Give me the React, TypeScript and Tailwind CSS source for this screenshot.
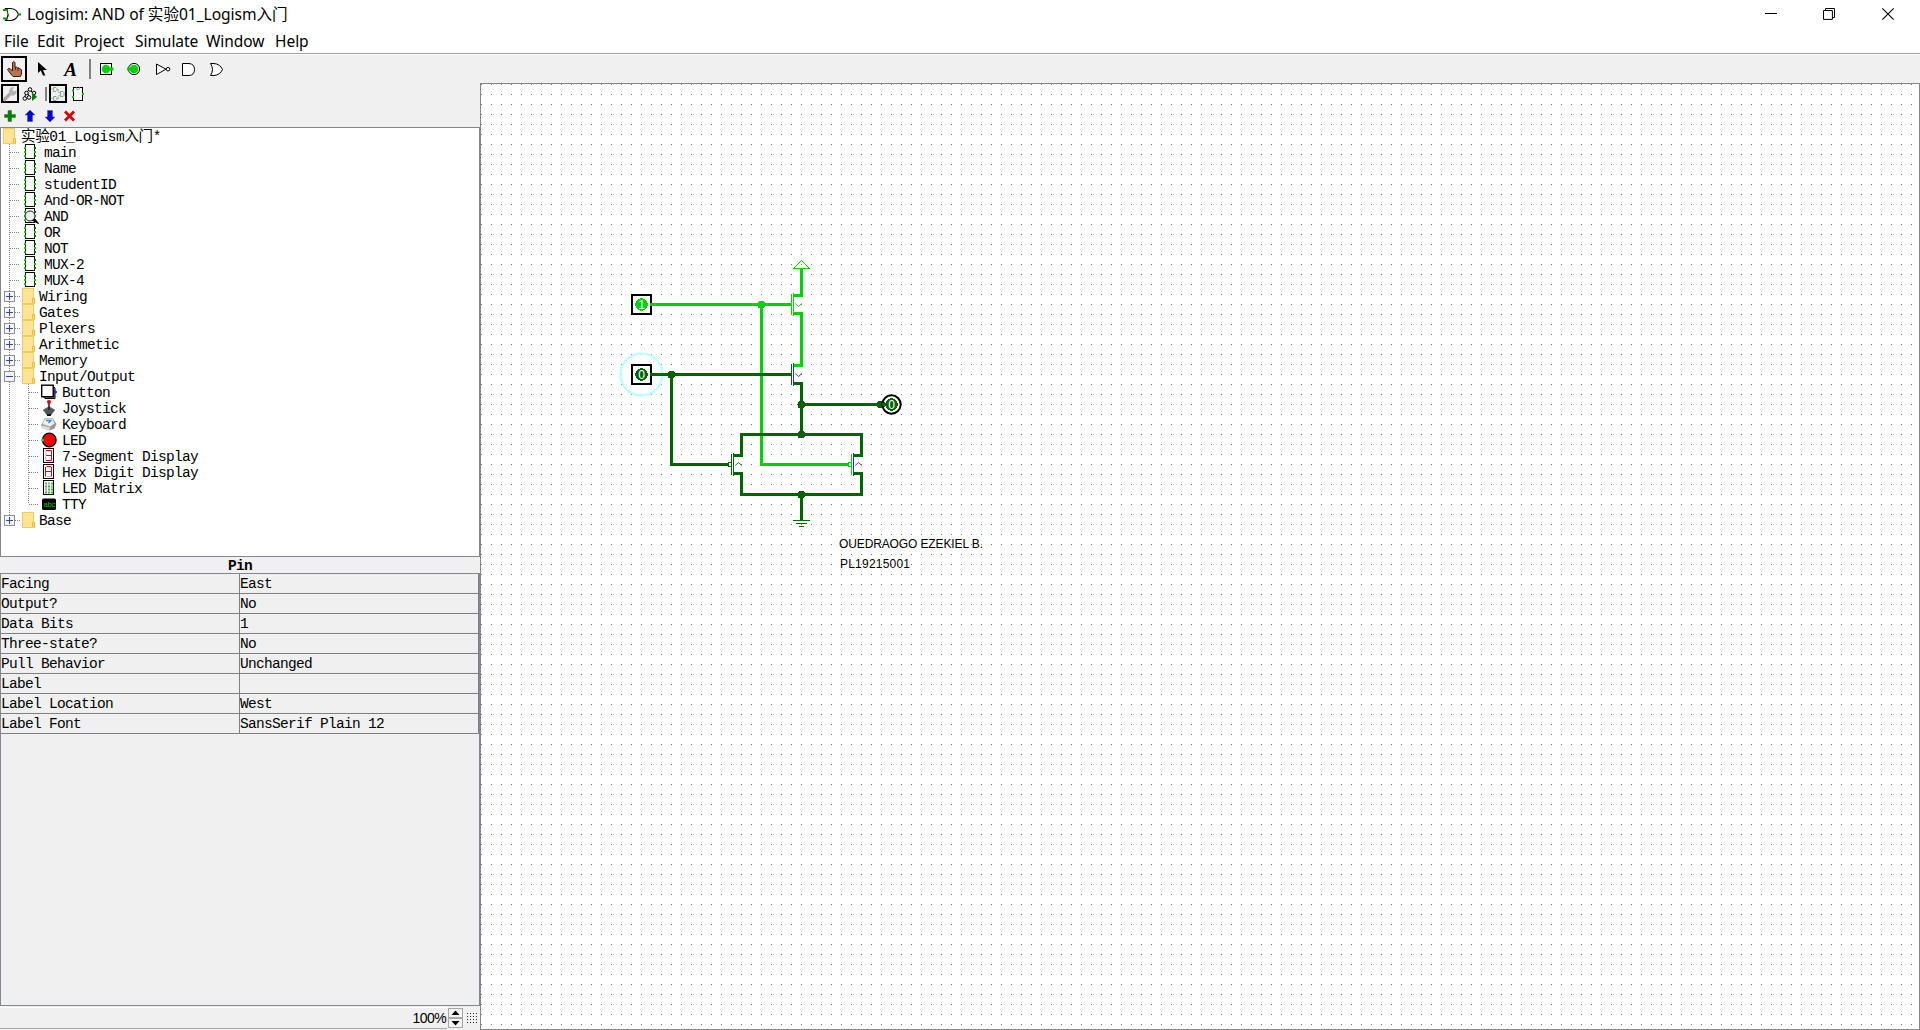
import type { ReactNode } from "react";

const MONO = "font-['Liberation_Mono','Noto_Sans_CJK_SC',monospace] text-[14.5px] tracking-[-0.7px] leading-[18px]";
const UI = "font-['Noto_Sans','Noto_Sans_CJK_SC',sans-serif]";

/* An icon cell whose drawing uses window coordinates, cropped to the cell. */
function Cell({ x, y, w, h, children }: { x: number; y: number; w: number; h: number; children?: ReactNode }) {
  return (
    <svg className="block shrink-0" width={w} height={h} viewBox={`${x} ${y} ${w} ${h}`} fill="none">
      {children}
    </svg>
  );
}

function TitleBar() {
  return (
    <header className="flex h-[28px] shrink-0 items-center bg-white">
      <Cell x={0} y={0} w={27} h={28}>
        <path d="M5.5 8.5H11C15 9 17.500 11 18.500 14.500C17 18 15 20 11 20.500H5.500C9 16.500 9 12.500 5.500 8.500Z" stroke="#000" strokeWidth="1.1" />
        <path d="M3 10H8M3 18.500H8M18 14.500H21" stroke="#009a00" strokeWidth="1.8" />
      </Cell>
      <span className={`${UI} text-[15.6px] leading-[28px] tracking-[-0.05px] whitespace-nowrap text-black`}>
        Logisim: AND of 实验01_Logism入门
      </span>
      <div className="ml-auto flex">
        <Cell x={1742} y={0} w={58} h={28}>
          <path d="M1765 13.5H1777" stroke="#000" />
        </Cell>
        <Cell x={1800} y={0} w={58} h={28}>
          <path d="M1823.5 10.5h8.900v8.9h-8.900zM1825.5 10V8.5h9v9H1832" stroke="#000" />
        </Cell>
        <Cell x={1858} y={0} w={62} h={28}>
          <path d="M1882.3 8.3L1893.7 19.7M1893.7 8.3L1882.3 19.7" stroke="#000" strokeWidth="1.1" />
        </Cell>
      </div>
    </header>
  );
}

function MenuBar() {
  return (
    <nav className={`${UI} flex h-[26px] shrink-0 border-b border-[#a0a0a0] bg-white pl-[4px] text-[15.5px] leading-[26px] tracking-[-0.05px] text-black`}>
      <span className="w-[33px]">File</span>
      <span className="w-[37px]">Edit</span>
      <span className="w-[61px]">Project</span>
      <span className="w-[71px]">Simulate</span>
      <span className="w-[69px]">Window</span>
      <span>Help</span>
    </nav>
  );
}

function MainToolbar() {
  return (
    <div className="flex h-[29px] shrink-0 border-t border-white bg-[#f0f0f0]">
      <Cell x={0} y={55} w={28} h={28}>
        <rect x="2" y="57" width="24" height="24" stroke="#000" strokeWidth="2" />
        <path
          d="M12.5 62.5Q13.5 60.5 15 62.5V67.5Q16.5 66 17.5 68Q19 67 19.7 69Q21.7 68.5 21.5 71V74L20.5 76.5H13L10 73L7.5 69.5Q8.5 67.5 10.5 69L12.5 71Z"
          fill="#b9734f"
          stroke="#3b1d10"
        />
        <path d="M15.5 67v3M18 68v3" stroke="#3b1d10" strokeWidth="0.8" />
      </Cell>
      <Cell x={28} y={55} w={28} h={28}>
        <path d="M38 62V73L40.8 70.5L43 75.5H45.3L43 70H47Z" fill="#000" />
      </Cell>
      <div className="flex w-[28px] shrink-0 items-center justify-center pt-px pl-px font-['Liberation_Serif',serif] text-[19px] leading-[28px] font-bold text-black italic">A</div>
      <Cell x={84} y={55} w={9} h={28}>
        <path d="M90 59V79" stroke="#808080" strokeWidth="2" />
      </Cell>
      <Cell x={93} y={55} w={28} h={28}>
        <rect x="100.5" y="63.5" width="11" height="11" fill="#fff" stroke="#000" />
        <circle cx="106" cy="69" r="4.3" fill="#00d200" />
        <path d="M106 69H113.5" stroke="#00d200" strokeWidth="3" />
      </Cell>
      <Cell x={121} y={55} w={28} h={28}>
        <circle cx="134" cy="69" r="5.6" fill="#fff" stroke="#000" />
        <circle cx="134" cy="69" r="4.3" fill="#00d200" />
        <path d="M127 69H134" stroke="#00d200" strokeWidth="3" />
      </Cell>
      <Cell x={149} y={55} w={28} h={28}>
        <path d="M156.5 64V74.5L166 69.2Z" fill="#fff" stroke="#000" />
        <circle cx="168" cy="69.2" r="1.8" fill="#fff" stroke="#000" />
      </Cell>
      <Cell x={177} y={55} w={28} h={28}>
        <path d="M182.5 63.5H189Q194.5 64 194.5 69.5Q194.5 75 189 75.5H182.5Z" fill="#fff" stroke="#000" />
      </Cell>
      <Cell x={205} y={55} w={28} h={28}>
        <path d="M210.5 63.5H214Q220 64 222.5 69.5Q220 75 214 75.5H210.5Q214.5 69.5 210.5 63.5Z" fill="#fff" stroke="#000" />
      </Cell>
    </div>
  );
}

function ExplorerToolbar() {
  return (
    <div className="flex h-[22px] shrink-0">
      <Cell x={0} y={83} w={22} h={22}>
        <rect x="2" y="85" width="16" height="17" stroke="#000" strokeWidth="2" />
        <path d="M4.5 99.5L11 93" stroke="#a8a8a8" strokeWidth="3.2" strokeLinecap="round" />
        <path d="M10 95L8.8 91L11 87.5L14 87L12.5 90L14 91.5L16.7 90L16.3 93.5L13.5 95.8Z" fill="#b4b4b4" />
      </Cell>
      <Cell x={22} y={83} w={20} h={22}>
        <path d="M25 99V96L27 92L29.5 89L32 92L34.5 95M27 92L29 96" stroke="#000" />
        <g fill="#f0f0f0" stroke="#000">
          <circle cx="30" cy="89.5" r="1.800" />
          <circle cx="26.5" cy="93" r="1.800" />
          <circle cx="34" cy="93" r="1.800" />
          <circle cx="24.8" cy="98.5" r="1.800" />
          <circle cx="29" cy="97.5" r="1.800" />
        </g>
        <path d="M32 92L37 97L32 101Z" fill="#008000" />
      </Cell>
      <Cell x={42} y={83} w={6} h={22}>
        <path d="M46 87V101" stroke="#808080" strokeWidth="2" />
      </Cell>
      <Cell x={48} y={83} w={22} h={22}>
        <rect x="50" y="85" width="16" height="17" stroke="#000" strokeWidth="2" />
        <path d="M51 89H53M51 98.500H53M57 89.5H58.500V92.500H60.5M57 98.500H58.500V95.500H60.5M64 93.5H65" stroke="#90e090" strokeWidth="1.200" />
        <path d="M53.5 87.5h2.500l1 1v2l-1 1h-2.500zM53.500 96.500h2.500l1 1v2l-1 1h-2.500zM60.5 91.5h2.5l1 1v3l-1 1h-2.5z" stroke="#999" />
      </Cell>
      <Cell x={70} y={83} w={20} h={22}>
        <rect x="73.5" y="87.5" width="9" height="13" fill="#fff" stroke="#000" />
        <path d="M76.5 87.5Q76.5 90 78 90Q79.5 90 79.5 87.5" stroke="#9a9a9a" />
        <path d="M73 89.500v2M73 96v2M83 93v2" stroke="#00c400" strokeWidth="2" />
      </Cell>
    </div>
  );
}

function EditToolbar() {
  return (
    <div className="flex h-[22px] shrink-0">
      <Cell x={0} y={105} w={20} h={22}>
        <path d="M8 110.5h3.5v4h4v3h-4v4H8v-4H4.500v-3H8z" fill="#008000" stroke="#3f7f3f" strokeWidth="0.6" />
      </Cell>
      <Cell x={20} y={105} w={20} h={22}>
        <path d="M30 110L35 115H32.500V121.500H27.500V115H25Z" fill="#0000e0" stroke="#5a5a90" strokeWidth="0.6" />
      </Cell>
      <Cell x={40} y={105} w={20} h={22}>
        <path d="M50 122L45 117H47.500V110.500H52.500V117H55Z" fill="#0000e0" stroke="#5a5a90" strokeWidth="0.6" />
      </Cell>
      <Cell x={60} y={105} w={20} h={22}>
        <path d="M65 111.500L74 120.500M74 111.500L65 120.500" stroke="#dc0000" strokeWidth="2.8" />
      </Cell>
    </div>
  );
}

const DOT = { stroke: "#808080", strokeDasharray: "1 1", shapeRendering: "crispEdges" as const };

function Folder({ x }: { x: number }) {
  return (
    <g>
      <path d={`M${x} 0.500H${x + 11.5}V10.500H${x + 13}V15.500H${x}Z`} fill="#ffe494" />
      <path d={`M${x + 0.5} 0V16M${x} 0.500H${x + 11.5}M${x + 11.5} 0V10M${x} 15.500H${x + 13}`} stroke="#f0cd5c" />
      <path d={`M${x + 10.500} 15V10.500H${x + 12.500}V15.500`} stroke="#e8b93c" />
    </g>
  );
}

function CircuitIcon({ current }: { current?: boolean }) {
  return (
    <g>
      <rect x="25.500" y="0.500" width="9" height="14" fill="#fff" stroke="#000" />
      <path d="M25 3v2M25 7v2M25 11v2M35 7v2" stroke="#00d200" strokeWidth="2" />
      <path d="M35 3v2M35 11v2" stroke="#006400" strokeWidth="2" />
      {current && (
        <>
          <circle cx="30" cy="8" r="5" fill="#eeeeff" stroke="#222" />
          <path d="M32.500 12.500L35 11L38.500 15.500Z" fill="#000" stroke="#000" />
        </>
      )}
    </g>
  );
}

const ioIcons: Record<string, ReactNode> = {
  Button: (
    <g>
      <path d="M43 12.500L45 14.500H55V4L53 2" fill="#777" stroke="#000" />
      <rect x="41.700" y="1.200" width="11.500" height="11.500" fill="#fff" stroke="#000" strokeWidth="1.4" />
      <circle cx="55.500" cy="8" r="1.500" fill="#2020ff" />
    </g>
  ),
  Joystick: (
    <g>
      <path d="M43 10L49 6.500L55 10L51 15H47Z" fill="#555" stroke="#777" strokeWidth="0.6" />
      <path d="M47 15H51" stroke="#111" strokeWidth="2" />
      <path d="M49 3V10" stroke="#222" strokeWidth="1.500" />
      <circle cx="49" cy="2" r="2" fill="#e00000" />
    </g>
  ),
  Keyboard: (
    <g>
      <path d="M41 9.500L45 2L53 2.500L56.500 8L54.500 12.500L49.500 14.500L42 12Z" fill="#999" />
      <path d="M42.500 8L45.500 2.500L52.500 3L54.500 7.500L50 10.500Z" fill="#f0f0f0" />
      <path d="M46 4.500H51L48.500 7" stroke="#3a8be0" strokeWidth="1.400" />
      <path d="M41.500 9.500L50 11.500L49.500 14L42 12Z" fill="#ddd" />
    </g>
  ),
  LED: (
    <g>
      <circle cx="49.300" cy="8" r="6.800" fill="#f80000" stroke="#000" strokeWidth="1.300" />
      <circle cx="42.500" cy="8" r="1.500" fill="#40c840" />
    </g>
  ),
  "7-Segment Display": (
    <g>
      <rect x="43.500" y="0.500" width="10" height="14" fill="#fff" stroke="#000" />
      <path d="M46 3.500V7" stroke="#bbb" />
      <path d="M46 2.500H51.500V12.500H46M46 7.500H51" stroke="#e80000" />
      <path d="M45.500 8.500V12" stroke="#bbb" />
    </g>
  ),
  "Hex Digit Display": (
    <g>
      <rect x="43.500" y="0.500" width="10" height="14" fill="#fff" stroke="#000" />
      <path d="M46.500 12.500H51" stroke="#bbb" />
      <path d="M45.500 12.500V3M46.500 2.500H51M51.500 3V12.500M46 7.500H51" stroke="#e80000" />
    </g>
  ),
  "LED Matrix": (
    <g>
      <rect x="43.500" y="0.500" width="10" height="14" fill="#fff" stroke="#000" />
      <path d="M46 2.500V13.500M49 2.500V13.500M52 2.500V13.500" stroke="#3cb43c" strokeWidth="2" strokeDasharray="2 1" />
      <path d="M48 3.500h2M51 6.500h2M45 9.500h2" stroke="#bbb" strokeWidth="2" />
    </g>
  ),
  TTY: (
    <g>
      <rect x="42" y="2.500" width="14" height="11.500" rx="1.500" fill="#000" />
      <text x="43.500" y="11" fontSize="7.500" fontFamily="Liberation Mono" letterSpacing="-0.600" fill="#00c400">
        abc
      </text>
    </g>
  ),
};

type Kind = "root" | "circuit" | "library" | "tool";
type Item = { kind: Kind; name: string; open?: boolean; last?: boolean };

const items: Item[] = [
  { kind: "root", name: "实验01_Logism入门*" },
  ...["main", "Name", "studentID", "And-OR-NOT", "AND", "OR", "NOT", "MUX-2", "MUX-4"].map((name): Item => ({ kind: "circuit", name })),
  ...["Wiring", "Gates", "Plexers", "Arithmetic", "Memory"].map((name): Item => ({ kind: "library", name })),
  { kind: "library", name: "Input/Output", open: true },
  ...Object.keys(ioIcons).map((name): Item => ({ kind: "tool", name, last: name === "TTY" })),
  { kind: "library", name: "Base", last: true },
];

const gutter: Record<Kind, number> = { root: 20, circuit: 43, library: 38, tool: 61 };

function TreeRow({ kind, name, open, last }: Item) {
  return (
    <div className="flex h-[16px]">
      <Cell x={1} y={0} w={gutter[kind]} h={16}>
        {kind === "root" && <Folder x={3} />}
        {kind !== "root" && <path d={kind === "library" && last ? "M9.500 0V8" : "M9.500 0V16"} {...DOT} />}
        {kind === "circuit" && (
          <>
            <path d="M10 8.500H20" {...DOT} />
            <CircuitIcon current={name === "AND"} />
          </>
        )}
        {kind === "library" && (
          <>
            <path d="M15 8.500H21" {...DOT} />
            <rect x="4.500" y="3.500" width="10" height="10" fill="#f4f4f4" stroke="#909090" />
            <path d={open ? "M6 8.500H13" : "M6 8.500H13M9.500 5V12"} stroke="#304a94" />
            <Folder x={22} />
          </>
        )}
        {kind === "tool" && (
          <>
            <path d={last ? "M28.500 0V8" : "M28.500 0V16"} {...DOT} />
            <path d="M29 8.500H38" {...DOT} />
            {ioIcons[name]}
          </>
        )}
      </Cell>
      <span className={kind === "root" ? "tracking-[-0.35px] whitespace-pre" : "whitespace-pre"}>{name}</span>
    </div>
  );
}

const attributes: [string, string][] = [
  ["Facing", "East"],
  ["Output?", "No"],
  ["Data Bits", "1"],
  ["Three-state?", "No"],
  ["Pull Behavior", "Unchanged"],
  ["Label", ""],
  ["Label Location", "West"],
  ["Label Font", "SansSerif Plain 12"],
];

function AttributeTable() {
  return (
    <section className={`${MONO} flex min-h-0 flex-1 flex-col text-black`}>
      <h2 className="h-[16px] text-center font-bold">Pin</h2>
      <div className="min-h-0 flex-1 border border-[#828790]">
        <div className="w-[478px] border-r border-[#808080]">
          {attributes.map(([key, value]) => (
            <div key={key} className="flex h-[20px] border-b border-[#808080] leading-[21px]">
              <span className="w-[239px] border-r border-[#808080]">{key}</span>
              <span className="whitespace-pre">{value}</span>
            </div>
          ))}
        </div>
      </div>
    </section>
  );
}

function ZoomBar() {
  return (
    <footer className="flex h-[24px] shrink-0 items-center">
      <div className="flex h-[22px] w-[447px] items-center justify-end border-t border-b border-t-white border-b-[#a8a8a8] bg-[#f0f0f0] pr-px font-['Liberation_Sans',sans-serif] text-[14px] leading-[20px] tracking-[-0.6px] text-black">
        100%
      </div>
      <Cell x={447} y={1006} w={33} h={24}>
        <rect x="448.500" y="1008.500" width="14" height="9" fill="#f3f3f3" stroke="#a8a8a8" />
        <rect x="448.500" y="1018.500" width="14" height="9" fill="#f3f3f3" stroke="#a8a8a8" />
        <path d="M455.500 1010.500L459.500 1015H451.500ZM455.500 1025.500L459.500 1021H451.500Z" fill="#000" />
        <path d="M467 1013.500H478M467 1016.500H478M467 1019.500H478M467 1022.500H478" stroke="#222" strokeDasharray="1 2" shapeRendering="crispEdges" />
      </Cell>
    </footer>
  );
}

const ON = "#00d200";
const OFF = "#006400";
const FLOAT = "#2828ff";

type TransistorProps = { x: number; y: number; gate: string; body: string; source: string; drain: string; inverted?: boolean };

function Transistor({ x, y, gate, body, source, drain, inverted }: TransistorProps) {
  return (
    <g transform={`translate(${x} ${y})`}>
      <path d="M-7 -8.500H2" stroke={source} strokeWidth="3" />
      <path d="M-7 9.500H2" stroke={drain} strokeWidth="3" />
      <path d="M-9.500 -10V11" stroke={gate} />
      <path d="M-7.500 -11V12" stroke={body} />
      {inverted ? (
        <>
          <path d="M-5.800 1.500L-2.500 -1.500L0.800 1.500" stroke={body} strokeWidth="0.900" shapeRendering="geometricPrecision" />
          <rect x="-12.500" y="-1.500" width="3" height="4" fill="#fff" stroke={gate} />
        </>
      ) : (
        <path d="M-5.800 -0.500L-2.500 2.500L0.800 -0.500" stroke={body} strokeWidth="0.900" shapeRendering="geometricPrecision" />
      )}
    </g>
  );
}

function PinValue({ x, y, color, value }: { x: number; y: number; color: string; value: string }) {
  return (
    <g>
      <circle cx={x} cy={y} r="6.300" fill={color} />
      <text x={x} y={y + 4.300} textAnchor="middle" fontFamily="Liberation Sans" fontSize="12" fill="#fff">
        {value}
      </text>
    </g>
  );
}

function Canvas() {
  return (
    <main className="min-w-0 flex-1 border border-[#828790] bg-white">
      <svg className="block" width="1438" height="945" viewBox="481 84 1438 945" fill="none" shapeRendering="crispEdges">
        <defs>
          <pattern id="grid" x="481" y="84" width="10" height="10" patternUnits="userSpaceOnUse">
            <rect width="1" height="1" fill="#777" />
          </pattern>
        </defs>
        <rect x="481" y="84" width="1438" height="945" fill="url(#grid)" />

        <circle cx="641.500" cy="374.500" r="21" stroke="#bfffff" strokeWidth="2.500" shapeRendering="geometricPrecision" />

        <g strokeWidth="3">
          <path d="M651 304.500H791M761.500 304.500V464.500H848M801.500 269V297M801.500 312V367" stroke={ON} />
          <path
            d="M651 374.500H791M671.500 374.500V464.500H728M801.500 382V434.500M801.500 404.500H882M741.500 457V434.500H861.500V457M741.500 472V494.500H861.500V472M801.500 494.500V520"
            stroke={OFF}
          />
        </g>
        <path d="M793.500 268.500L801.500 260.500L809.500 268.500Z" stroke={ON} />
        <path d="M793 520.500H810M796 523.500H807M799 526.500H804" stroke={OFF} />

        <Transistor x={801} y={304} gate={ON} body={ON} source={ON} drain={ON} />
        <Transistor x={801} y={374} gate={OFF} body={FLOAT} source={ON} drain={OFF} />
        <Transistor x={741} y={464} gate={OFF} body={OFF} source={OFF} drain={OFF} inverted />
        <Transistor x={861} y={464} gate={ON} body={FLOAT} source={OFF} drain={OFF} inverted />

        <circle cx="761.500" cy="304.500" r="4" fill={ON} />
        <g fill={OFF}>
          <circle cx="671.500" cy="374.500" r="4" />
          <circle cx="801.500" cy="404.500" r="4" />
          <circle cx="801.500" cy="434.500" r="4" />
          <circle cx="801.500" cy="494.500" r="4" />
          <circle cx="881" cy="404.500" r="4" />
        </g>

        <rect x="632" y="295" width="19" height="19" stroke="#000" strokeWidth="2" />
        <rect x="632" y="365" width="19" height="19" stroke="#000" strokeWidth="2" />
        <circle cx="891.500" cy="404.500" r="9.200" stroke="#000" strokeWidth="2" shapeRendering="geometricPrecision" />
        <path d="M650 304.500H653" stroke={ON} strokeWidth="3" />
        <path d="M650 374.500H653M882 404.500H887" stroke={OFF} strokeWidth="3" />
        <PinValue x={641.5} y={304.5} color={ON} value="1" />
        <PinValue x={641.5} y={374.5} color={OFF} value="0" />
        <PinValue x={891.5} y={404.5} color={OFF} value="0" />

        <g fontFamily="Liberation Sans, sans-serif" fontSize="12" fill="#000">
          <text x="839" y="548" textLength="144">OUEDRAOGO EZEKIEL B.</text>
          <text x="840" y="568" textLength="70">PL19215001</text>
        </g>
      </svg>
    </main>
  );
}

export default function App() {
  return (
    <div className="flex h-[1030px] w-[1920px] flex-col overflow-hidden bg-[#f0f0f0]">
      <TitleBar />
      <MenuBar />
      <MainToolbar />
      <div className="flex min-h-0 flex-1">
        <aside className="flex w-[480px] shrink-0 flex-col">
          <ExplorerToolbar />
          <EditToolbar />
          <div className={`${MONO} h-[430px] shrink-0 border border-[#828790] bg-white text-black`}>
            {items.map((item) => (
              <TreeRow key={item.name} {...item} />
            ))}
          </div>
          <AttributeTable />
          <ZoomBar />
        </aside>
        <Canvas />
      </div>
    </div>
  );
}
